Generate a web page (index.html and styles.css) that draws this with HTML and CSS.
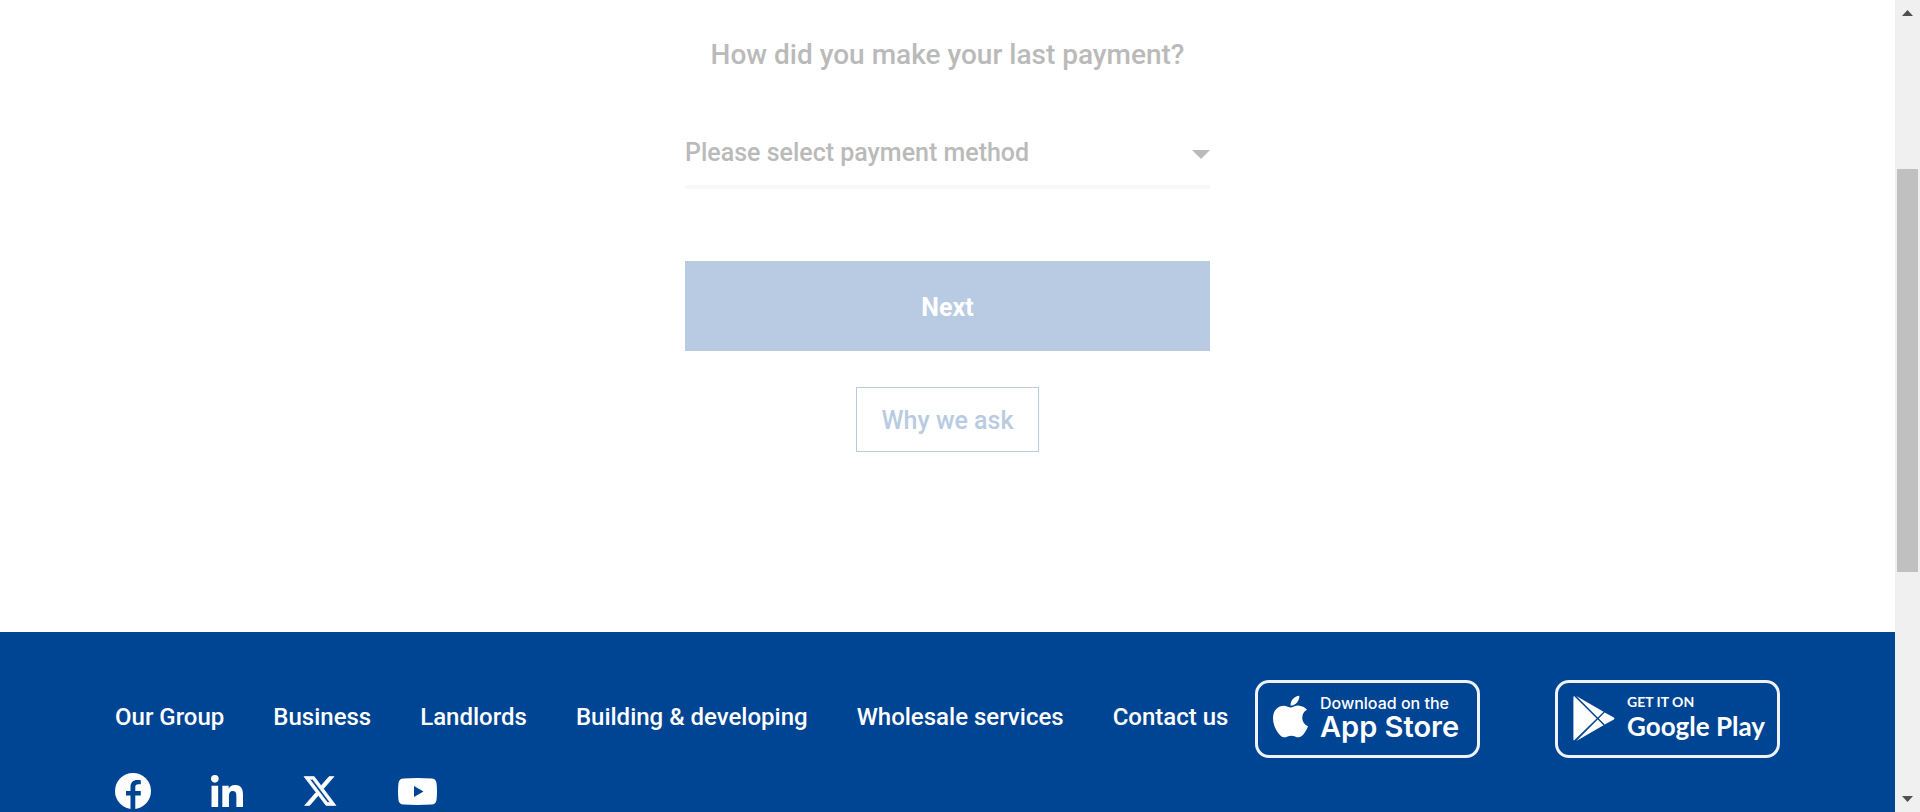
FILE: index.html
```
<!DOCTYPE html>
<html lang="en">
<head>
<meta charset="utf-8">
<title>Payment details</title>
<link rel="stylesheet" href="styles.css">
</head>
<body>
<div class="page">
  <main class="content">
    <form class="form">
      <label class="question" for="method">How did you make your last payment?</label>
      <div class="select-wrap">
        <select class="select" id="method">
          <option>Please select payment method</option>
        </select>
        <svg class="caret" viewBox="0 0 18 9" aria-hidden="true"><path d="M0 0h18L9 9z"/></svg>
      </div>
      <button class="next" type="submit">Next</button>
      <button class="why" type="button">Why we ask</button>
    </form>
  </main>
  <footer class="footer">
    <div class="footer-links">
      <nav class="nav">
        <a href="#">Our Group</a>
        <a href="#">Business</a>
        <a href="#">Landlords</a>
        <a href="#">Building &amp; developing</a>
        <a href="#">Wholesale services</a>
        <a href="#">Contact us</a>
      </nav>
      <div class="social">
        <a href="#" aria-label="Facebook"><svg class="facebook" viewBox="0 0 36 36"><circle cx="18" cy="18" r="18"/><path class="cut" d="M15.500 37V22.500H11V18h4.500v-4c0-4.800 2.700-7 6.800-7 1.400 0 2.500.1 3.500.3v4h-2.400c-2.500 0-3.100 1.200-3.100 3V18h5.500v4.500h-5.500V37z"/></svg></a>
        <a href="#" aria-label="LinkedIn"><svg class="linkedin" viewBox="0 0 448 448"><path d="M100.280 448H7.400V148.900h92.880zM53.790 108.100C24.090 108.100 0 83.500 0 53.800a53.790 53.790 0 0 1 107.580 0c0 29.700-24.100 54.300-53.790 54.300zM447.900 448h-92.680V302.400c0-34.700-.7-79.200-48.290-79.200-48.290 0-55.690 37.700-55.690 76.700V448h-92.780V148.900h89.080v40.800h1.300c12.400-23.500 42.690-48.300 87.880-48.300 94 0 111.280 61.900 111.280 142.300V448z"/></svg></a>
        <a href="#" aria-label="X"><svg class="x" viewBox="26 47 462 418"><path d="M389.200 48h70.600L305.600 224.200 487 464H345L233.700 318.600 106.500 464H35.800L200.700 275.500 26.800 48H172.400L272.900 180.900 389.200 48zM364.400 421.800h39.100L151.100 88h-42L364.400 421.800z"/></svg></a>
        <a href="#" aria-label="YouTube"><svg class="youtube" viewBox="0 0 39 27"><path d="M5.500.4Q19.500-.4 33.500.4 38 .6 38.500 5q1 8.500 0 17-.5 4.300-5 4.600-14 .8-28 0Q1 26.300.5 22q-1-8.500 0-17Q1 .6 5.500.4z"/><path class="cut" d="M16 8v11l9.500-5.500z"/></svg></a>
      </div>
    </div>
    <div class="stores">
      <a class="badge" href="#">
        <svg class="apple" viewBox="4 32 376 448"><path d="M318.700 268.700c-.2-36.700 16.400-64.400 50-84.800-18.800-26.900-47.200-41.700-84.700-44.600-35.500-2.800-74.300 20.700-88.500 20.700-15 0-49.400-19.700-76.400-19.700C63.300 141.200 4 184.800 4 273.500q0 39.300 14.400 81.200c12.800 36.700 59 126.700 107.200 125.200 25.200-.6 43-17.900 75.800-17.900 31.800 0 48.300 17.900 76.400 17.900 48.600-.7 90.400-82.500 102.600-119.300-65.200-30.700-61.700-90-61.700-91.900zm-56.600-164.200c27.300-32.400 24.800-61.900 24-72.500-24.100 1.400-52 16.400-67.900 34.900-17.500 19.800-27.800 44.300-25.600 71.900 26.100 2 49.900-11.400 69.500-34.300z"/></svg>
        <span class="badge-text"><span class="badge-small">Download on the</span><span class="badge-large">App Store</span></span>
      </a>
      <a class="badge google" href="#">
        <svg class="play" viewBox="0 0 42 45"><path d="M1 0Q.4.500.4 1.500V43Q.4 44 1 44.600L23.700 22.500zM3.300 0 24.700 21.400l5.900-5.600zM31.700 16.400 25.700 22.500l6 6 9.200-5Q42 22.500 40.900 21.500zM24.700 23.600 3.300 45l27.200-15.800z"/></svg>
        <span class="badge-text"><span class="badge-small">GET IT ON</span><span class="badge-large">Google Play</span></span>
      </a>
    </div>
  </footer>
</div>
<div class="scrollbar" aria-hidden="true">
  <svg class="arrow" viewBox="0 0 11 6"><path d="M5.500 0 11 6H0z"/></svg>
  <div class="track"><div class="thumb"></div></div>
  <svg class="arrow" viewBox="0 0 11 6"><path d="M5.500 6 11 0H0z"/></svg>
</div>
</body>
</html>
```
FILE: styles.css
```
* {
  box-sizing: border-box;
}

body {
  margin: 0;
  height: 100vh;
  display: flex;
  overflow: hidden;
  background: #fff;
  font-family: Roboto, "Liberation Sans", sans-serif;
  font-weight: 500;
}

.page {
  flex: 1;
  min-width: 0;
  display: flex;
  flex-direction: column;
}

.content {
  padding: 37px 24px 180px;
}

.form {
  max-width: 525px;
  margin: 0 auto;
  display: flex;
  flex-direction: column;
  align-items: center;
}

.question {
  color: #bababa;
  font-size: 28px;
  line-height: 36px;
  white-space: nowrap;
}

.select-wrap {
  display: grid;
  align-items: center;
  width: 100%;
  margin: 44px 0 72px;
  border-bottom: 4px solid #f8f8f8;
}

.select,
.caret {
  grid-area: 1 / 1;
}

.select {
  appearance: none;
  width: 100%;
  height: 68px;
  padding: 2px 0 0;
  border: 0;
  border-radius: 0;
  background: transparent;
  color: #bababa;
  font: inherit;
  font-size: 25px;
}

.caret {
  justify-self: end;
  width: 18px;
  height: 9px;
  margin-top: 6px;
  fill: #bababa;
  pointer-events: none;
}

.next,
.why {
  padding: 2px 0 0;
  font: inherit;
  font-size: 25px;
}

.next {
  width: 100%;
  height: 90px;
  margin-bottom: 36px;
  border: 0;
  background: #b9cbe2;
  color: #fff;
  font-weight: 700;
}

.why {
  height: 65px;
  padding: 2px 25px 0;
  border: 1px solid #b9cbe2;
  background: transparent;
  color: #b9cbe2;
}

.footer {
  flex: 1;
  display: flex;
  justify-content: space-between;
  align-items: flex-start;
  padding: 48px 115px 0;
  background: #004494;
  color: #fff;
}

.footer a {
  color: inherit;
  text-decoration: none;
}

.footer svg {
  display: block;
  flex-shrink: 0;
  fill: #fff;
}

.footer .cut {
  fill: #004494;
}

.nav {
  display: flex;
  gap: 49px;
  padding-top: 21px;
  font-size: 24px;
  line-height: 32px;
  white-space: nowrap;
}

.social {
  display: flex;
  align-items: center;
  padding-top: 40px;
}

.facebook {
  width: 36px;
  height: 36px;
  margin-right: 60px;
}

.linkedin {
  width: 32px;
  height: 32px;
  margin-right: 61px;
}

.footer .x {
  width: 32px;
  height: 30px;
  margin-right: 62px;
  stroke: #fff;
  stroke-width: 10px;
  overflow: visible;
}

.youtube {
  width: 39px;
  height: 27px;
}

.stores {
  display: flex;
  gap: 75px;
}

.badge {
  display: flex;
  align-items: flex-start;
  gap: 12px;
  width: 225px;
  height: 78px;
  padding: 12px 0 0 15px;
  border: 3px solid #f0f2fa;
  border-radius: 14px;
  font-family: Inter, sans-serif;
  white-space: nowrap;
}

.badge-text {
  display: flex;
  flex-direction: column;
}

.badge-small {
  font-size: 16px;
  line-height: 16px;
}

.badge-large {
  font-size: 29px;
  line-height: 32px;
  font-weight: 600;
}

.google {
  gap: 12px;
  padding-top: 11px;
  font-family: Lato, sans-serif;
  font-weight: 700;
}

.google .badge-small {
  font-size: 14px;
}

.google .badge-large {
  font-size: 26px;
  font-weight: 700;
}

.apple {
  width: 35px;
  height: 43px;
}

.play {
  width: 42px;
  height: 45px;
  margin-top: 2px;
}

.scrollbar {
  flex: 0 0 25px;
  display: flex;
  flex-direction: column;
  align-items: center;
  padding: 10px 0;
  background: #f0f0f0;
}

.arrow {
  width: 11px;
  height: 6px;
  fill: #505050;
}

.track {
  flex: 1;
  align-self: stretch;
  padding: 153px 2px 0;
}

.thumb {
  height: 52%;
  min-height: 403px;
  background: #c0c0c0;
}
```
